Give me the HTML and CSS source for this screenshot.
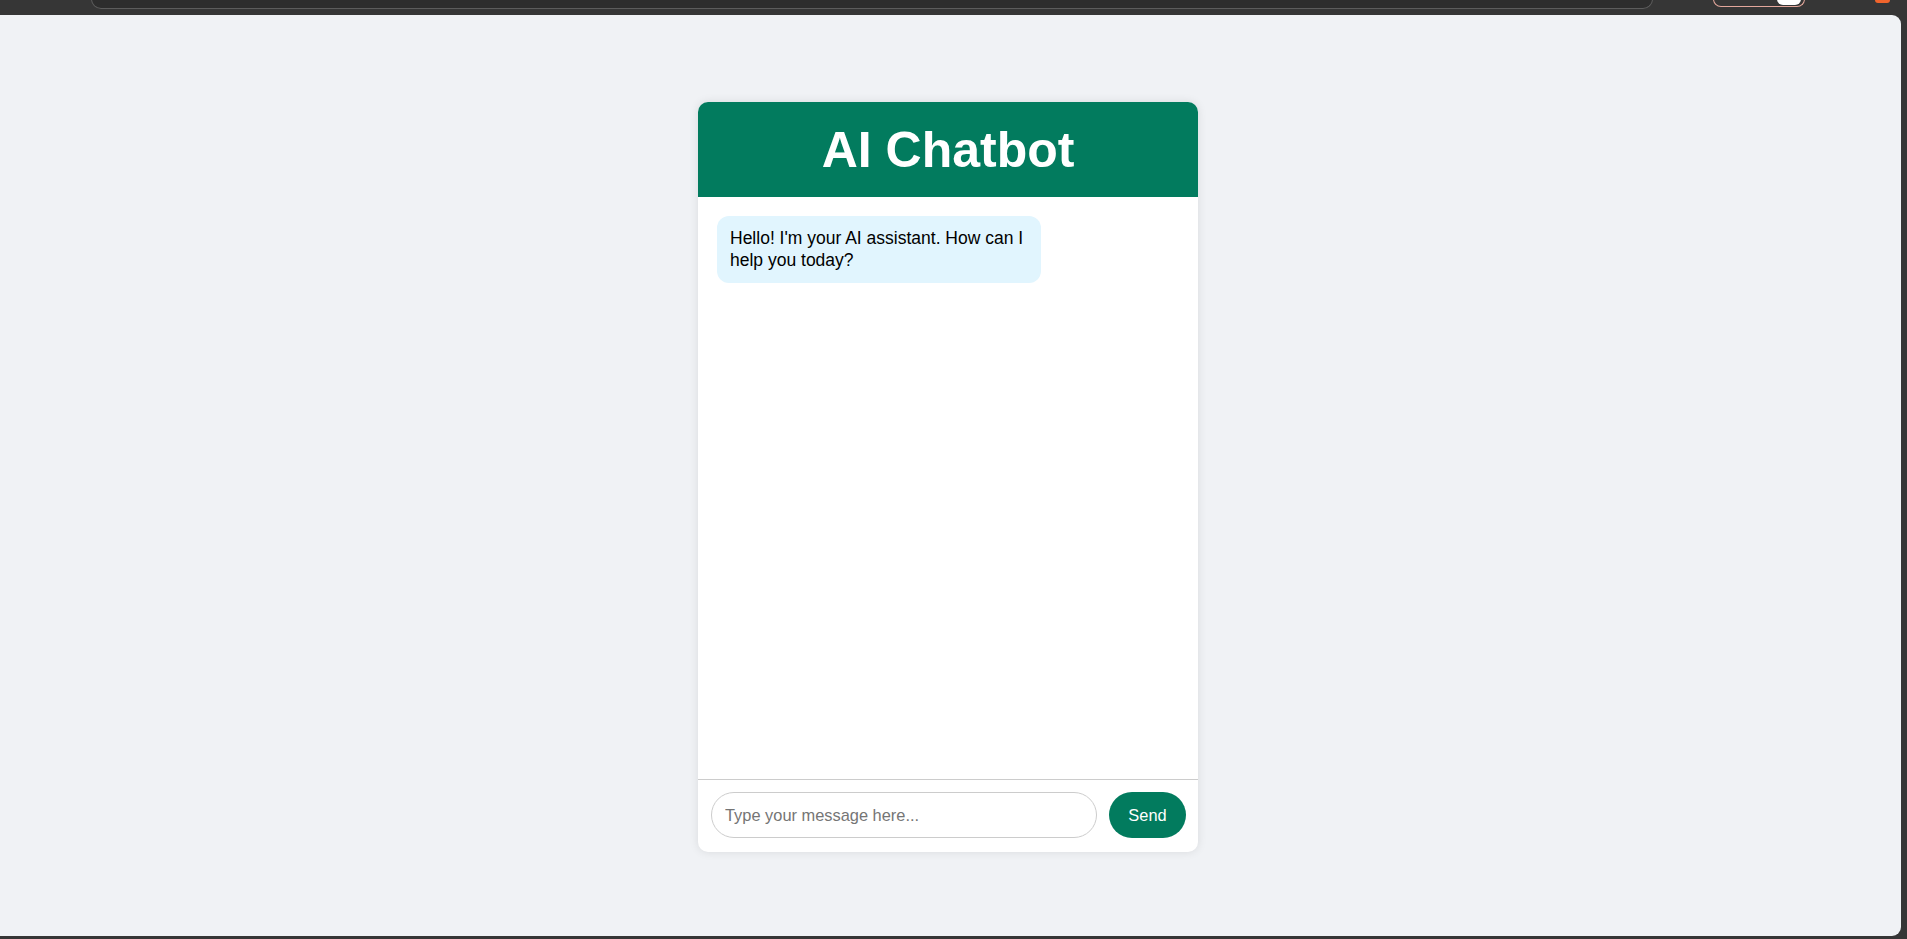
FILE: index.html
```html
<!DOCTYPE html>
<html lang="en">
<head>
<meta charset="utf-8">
<title>AI Chatbot</title>
<link rel="stylesheet" href="styles.css">
</head>
<body>
  <div class="chrome">
    <div class="urlbar"></div>
    <div class="toggle"><span class="knob"></span></div>
    <div class="ext"></div>
  </div>
  <main class="viewport">
    <section class="chat">
      <header class="chat-header">
        <h1>AI Chatbot</h1>
      </header>
      <div class="messages">
        <div class="bubble bot">Hello! I'm your AI assistant. How can I help you today?</div>
      </div>
      <form class="composer">
        <input class="msg-input" type="text" placeholder="Type your message here...">
        <button class="send" type="button">Send</button>
      </form>
    </section>
  </main>
</body>
</html>
```
FILE: styles.css
```css
* { box-sizing: border-box; }
html, body { margin: 0; padding: 0; }
body {
  background: #363636;
  font-family: "Liberation Sans", Arial, sans-serif;
  width: 1907px;
  height: 939px;
  overflow: hidden;
}
.chrome {
  height: 15px;
  display: flex;
  align-items: flex-start;
  overflow: hidden;
}
.urlbar {
  margin-left: 91px;
  width: 1562px;
  height: 10px;
  margin-top: -1px;
  background: #2d2d2d;
  border: 1px solid #5c5c5c;
  border-top: none;
  border-radius: 0 0 14px 14px;
}
.toggle {
  margin-left: 60px;
  width: 92px;
  height: 8px;
  margin-top: -1px;
  border: 1px solid #e3a79c;
  border-top: none;
  border-radius: 0 0 10px 10px;
  display: flex;
  justify-content: flex-end;
  padding-right: 3px;
}
.knob {
  width: 24px;
  height: 6px;
  background: #ffffff;
  border-radius: 0 0 12px 12px;
}
.ext {
  margin-left: 70px;
  width: 15px;
  height: 3px;
  background: #f0642c;
  border-radius: 0 0 4px 4px;
}
.viewport {
  width: 1901px;
  height: 921px;
  background: #f0f2f5;
  border-radius: 0 9px 9px 0;
  display: flex;
  justify-content: center;
  align-items: flex-start;
  padding: 87px 5px 0 0;
}
.chat {
  width: 500px;
  height: 750px;
  background: #ffffff;
  border-radius: 10px;
  box-shadow: 0 0 10px rgba(0, 0, 0, 0.1);
  display: flex;
  flex-direction: column;
  overflow: hidden;
}
.chat-header {
  background: #027b5e;
  color: #ffffff;
  height: 95px;
  display: flex;
  align-items: center;
  justify-content: center;
}
.chat-header h1 {
  margin: 0;
  font-size: 50px;
  font-weight: bold;
  line-height: 1;
}
.messages {
  flex: 1;
  padding: 19px;
  display: flex;
  flex-direction: column;
  align-items: flex-start;
}
.bubble {
  max-width: 324px;
  padding: 12px 12px 12px 13px;
  border-radius: 12px;
  font-size: 17.5px;
  line-height: 21.5px;
  color: #000000;
}
.bubble.bot {
  background: #e1f5fe;
}
.composer {
  margin: 0;
  border-top: 1px solid #cccccc;
  padding: 12px 12px 14px 13px;
  display: flex;
  gap: 12px;
}
.msg-input {
  flex: 1;
  height: 46px;
  border: 1px solid #cccccc;
  border-radius: 23px;
  padding: 0 13px;
  font-family: "Liberation Sans", Arial, sans-serif;
  font-size: 16.4px;
  color: #000;
  outline: none;
}
.msg-input::placeholder {
  color: #757575;
}
.send {
  width: 77px;
  height: 46px;
  border: none;
  border-radius: 23px;
  background: #027b5e;
  color: #ffffff;
  font-family: "Liberation Sans", Arial, sans-serif;
  font-size: 16.4px;
  cursor: pointer;
}
```
